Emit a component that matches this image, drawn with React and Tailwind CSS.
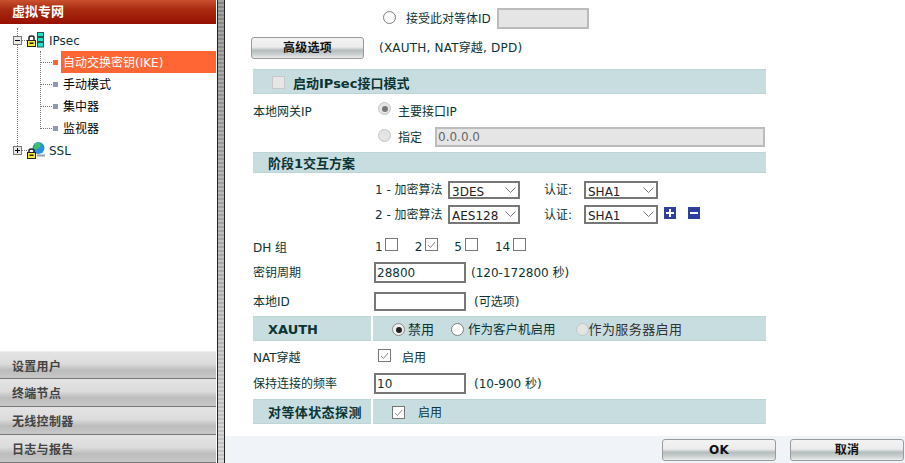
import React from "react";

const FONT = "font-['DejaVu_Sans','Noto_Sans_CJK_SC',sans-serif]";

/* ── Small form bits ── */

function Radio({ on, disabled, className = "" }) {
  return (
    <span
      className={`flex h-[13px] w-[13px] shrink-0 items-center justify-center rounded-full border ${
        disabled ? "border-[#c4c4c4] bg-[#e4e4e4]" : on ? "border-[#8a8a8a] bg-[#efefef]" : "border-[#7d7d7d] bg-white"
      } ${className}`}
    >
      {on && <span className={`h-[6px] w-[6px] rounded-full ${disabled ? "bg-[#777]" : "bg-[#222]"}`} />}
    </span>
  );
}

function Check({ on, disabled, className = "" }) {
  return (
    <span
      className={`flex h-[13px] w-[13px] shrink-0 items-center justify-center border ${
        disabled ? "border-[#c8c8c8] bg-[#e6e6e6]" : "border-[#777] bg-white"
      } ${className}`}
    >
      {on && (
        <svg width="9" height="8" viewBox="0 0 9 8" fill="none">
          <path d="M1 4 L3.5 6.5 L8 1" stroke="#8a8a8a" strokeWidth="1" />
        </svg>
      )}
    </span>
  );
}

function Field({ value = "", className = "", disabled }) {
  return (
    <input
      readOnly
      value={value}
      className={`box-border border-2 px-[1px] text-[12px] outline-none ${
        disabled ? "border-[#bcbcbc] bg-[#e5e5e5] text-[#666]" : "border-[#777] bg-white text-[#0b3535]"
      } ${FONT} ${className}`}
    />
  );
}

function Select({ value, className = "" }) {
  return (
    <span className={`relative block shrink-0 ${className}`}>
      <select
        value={value}
        onChange={() => {}}
        className={`box-border h-full w-full appearance-none border-2 border-[#777] bg-white pl-[2px] text-[12px] text-[#222] outline-none ${FONT}`}
      >
        <option>{value}</option>
      </select>
      <svg className="pointer-events-none absolute right-[4px] top-[6px]" width="11" height="6" viewBox="0 0 11 6" fill="none">
        <path d="M0.5 0.5 L5.5 5.5 L10.5 0.5" stroke="#777" strokeWidth="1" />
      </svg>
    </span>
  );
}

function GlossButton({ children, className = "" }) {
  return (
    <button
      className={`flex items-center justify-center rounded-[3px] border border-[#9a9a9a] bg-[linear-gradient(#f3f3f3_0%,#ececec_45%,#b4bcbc_62%,#cfd4d4_85%,#eeeeee_100%)] text-[12px] font-bold tracking-[0.3px] text-[#111] ${className}`}
    >
      {children}
    </button>
  );
}

function Band({ className = "", children }) {
  return <div className={`flex items-center border-y border-y-[#bdd5d5] bg-[#c8dddf] ${className}`}>{children}</div>;
}

/* ── Sidebar ── */

function IpsecIcon() {
  return (
    <span className="relative block h-[16px] w-[17px]">
      <svg className="absolute bottom-[1px] left-0" width="9" height="12" viewBox="0 0 9 12">
        <path d="M2 6 V2.5 Q2 1 4.5 1 Q7 1 7 2.5 V6" fill="none" stroke="#222" strokeWidth="1.5" />
        <rect x="0.5" y="5.5" width="8" height="6" fill="#f5e93a" stroke="#222" strokeWidth="1" />
        <rect x="2.5" y="7.5" width="4" height="1.5" fill="#222" />
      </svg>
      <svg className="absolute right-0 top-0" width="7" height="16" viewBox="0 0 7 16">
        <rect x="0.5" y="0.5" width="6" height="4" fill="#1fe0c8" stroke="#1a5a50" />
        <rect x="0.5" y="5.5" width="6" height="4" fill="#1fe0c8" stroke="#1a5a50" />
        <rect x="0.5" y="10.5" width="6" height="4.5" fill="#1fe0c8" stroke="#1a5a50" />
      </svg>
    </span>
  );
}

function SslIcon() {
  return (
    <span className="relative block h-[17px] w-[18px]">
      <svg className="absolute right-0 top-0" width="13" height="15" viewBox="0 0 13 15">
        <circle cx="6.5" cy="6" r="6" fill="#2a8fe0" />
        <path d="M3 1.5 Q6 -0.5 8.5 1.5 Q9.5 5 6.5 6 Q4.5 8.5 1.5 6.5 Z" fill="#3fc063" />
        <rect x="5" y="12.5" width="8" height="2" fill="#8fa0b0" />
      </svg>
      <svg className="absolute bottom-0 left-0" width="9" height="11" viewBox="0 0 9 11">
        <path d="M2 5 V2.5 Q2 1 4.5 1 Q7 1 7 2.5 V5" fill="none" stroke="#222" strokeWidth="1.5" />
        <rect x="0.5" y="4.5" width="8" height="6" fill="#f5e93a" stroke="#222" strokeWidth="1" />
        <rect x="2.5" y="6.5" width="4" height="1.5" fill="#222" />
      </svg>
    </span>
  );
}

function Expander({ open }) {
  return (
    <span className="relative z-10 flex h-[9px] w-[9px] items-center justify-center border border-[#777] bg-[#e8e8e8]">
      <span className="absolute h-px w-[5px] bg-black" />
      {!open && <span className="absolute h-[5px] w-px bg-black" />}
    </span>
  );
}

function TreeItem({ label, active }) {
  return (
    <div className="flex h-[22px] items-center">
      <span className="ml-[41px] h-px w-[11px] border-t border-dotted border-t-[#777]" />
      <span className={`ml-[1px] h-[5px] w-[5px] ${active ? "bg-[#ff6633]" : "bg-[#8f98b5]"}`} />
      <span
        className={`ml-[3px] flex h-[22px] flex-1 items-center pl-[2px] pt-[2px] text-[12px] ${
          active ? "bg-[#ff6633] text-white" : "text-black"
        }`}
      >
        {label}
      </span>
    </div>
  );
}

function Accordion({ label, className = "h-[28px]" }) {
  return (
    <div
      className={`flex items-center border-b-[1.5px] border-b-[#777] bg-[linear-gradient(#e4e4e4_0%,#dcdcdc_45%,#bcbcbc_70%,#c8c8c8_100%)] pl-[12px] pt-[3px] text-[12px] font-bold tracking-[0.3px] text-[#444] ${className}`}
    >
      {label}
    </div>
  );
}

function Sidebar() {
  return (
    <aside className="flex h-full w-[216px] shrink-0 flex-col bg-white">
      <div className="flex h-[24px] items-center bg-[linear-gradient(#c9512f_0%,#a82a10_40%,#951000_100%)] pl-[12px] text-[13px] font-bold text-white">
        虚拟专网
      </div>
      <div className="relative flex-1 pt-[7px]">
        <span className="absolute left-[17px] top-[4px] h-[118px] border-l border-dotted border-l-[#777]" />
        <span className="absolute left-[40px] top-[27px] h-[78px] border-l border-dotted border-l-[#777]" />
        <div className="flex h-[18px] items-center pl-[13px]">
          <Expander open />
          <span className="h-px w-[5px] border-t border-dotted border-t-[#777]" />
          <IpsecIcon />
          <span className="ml-[5px] pt-[1px] text-[12px] text-[#0b3535]">IPsec</span>
        </div>
        <div className="mt-[2px]">
          <TreeItem label="自动交换密钥(IKE)" active />
          <TreeItem label="手动模式" />
          <TreeItem label="集中器" />
          <TreeItem label="监视器" />
        </div>
        <div className="flex h-[22px] items-center pl-[13px]">
          <Expander />
          <span className="h-px w-[5px] border-t border-dotted border-t-[#777]" />
          <SslIcon />
          <span className="ml-[4px] pt-[2px] text-[12px] text-[#0b3535]">SSL</span>
        </div>
      </div>
      <div className="h-px bg-[#eeeeee]" />
      <Accordion label="设置用户" className="h-[27px]" />
      <Accordion label="终端节点" />
      <Accordion label="无线控制器" />
      <Accordion label="日志与报告" />
    </aside>
  );
}

/* ── Form ── */

function Form() {
  return (
    <div className="ml-[28px] w-[513px] text-[12px] text-[#0b3535]">
      <div className="flex h-[21px] items-center pl-[130px]">
        <Radio className="-mt-[3px]" />
        <span className="ml-[10px]">接受此对等体ID</span>
        <Field disabled className="ml-[6px] h-[21px] w-[92px]" />
      </div>

      <div className="mt-[8px] flex h-[22px] items-center">
        <GlossButton className="-ml-[2px] h-[22px] w-[113px]">高级选项</GlossButton>
        <span className="ml-[15px] tracking-[0.2px]">(XAUTH, NAT穿越, DPD)</span>
      </div>

      <Band className="mt-[10px] h-[25px] pl-[19px] pt-[2px] text-[13px] font-bold">
        <Check disabled />
        <span className="ml-[8px] pt-[2px]">启动IPsec接口模式</span>
      </Band>

      <div className="mt-[6px] flex h-[22px] items-center">
        <span className="w-[125px] pt-[1px]">本地网关IP</span>
        <Radio on disabled className="-mt-[5px]" />
        <span className="ml-[7px] pt-[1px]">主要接口IP</span>
      </div>
      <div className="mt-[5px] flex h-[20px] items-center pl-[125px]">
        <Radio disabled className="-mt-[3px]" />
        <span className="ml-[7px] pt-[2px]">指定</span>
        <Field disabled value="0.0.0.0" className="ml-[13px] h-[20px] w-[330px]" />
      </div>

      <Band className="mt-[5px] h-[21px] pl-[15px] pt-[2px] text-[13px] font-bold">阶段1交互方案</Band>

      <div className="mt-[8px] flex h-[18px] items-center">
        <span className="w-[122px] shrink-0" />
        <span className="w-[73px]">1 - 加密算法</span>
        <Select value="3DES" className="h-[18px] w-[72px]" />
        <span className="ml-[24px] w-[40px]">认证:</span>
        <Select value="SHA1" className="h-[18px] w-[74px]" />
      </div>
      <div className="mt-[6px] flex h-[19px] items-center">
        <span className="w-[122px] shrink-0" />
        <span className="w-[73px]">2 - 加密算法</span>
        <Select value="AES128" className="h-[19px] w-[72px]" />
        <span className="ml-[24px] w-[40px]">认证:</span>
        <Select value="SHA1" className="h-[19px] w-[74px]" />
        <span className="-mt-[4px] ml-[6px] flex h-[12px] w-[12px] items-center justify-center bg-[#2f3f9f]">
          <svg width="8" height="8" viewBox="0 0 8 8"><path d="M0 4H8M4 0V8" stroke="#fff" strokeWidth="2" /></svg>
        </span>
        <span className="-mt-[4px] ml-[12px] flex h-[12px] w-[12px] items-center justify-center bg-[#2f3f9f]">
          <svg width="8" height="8" viewBox="0 0 8 8"><path d="M0 4H8" stroke="#fff" strokeWidth="2" /></svg>
        </span>
      </div>

      <div className="mt-[13px] flex h-[18px] items-center">
        <span className="w-[122px] pt-[3px]">DH 组</span>
        <span className="pt-[2px]">1</span>
        <Check className="-mt-[3px] ml-[2px]" />
        <span className="ml-[17px] pt-[2px]">2</span>
        <Check on className="-mt-[3px] ml-[3px]" />
        <span className="ml-[16px] pt-[2px]">5</span>
        <Check className="-mt-[3px] ml-[3px]" />
        <span className="ml-[17px] pt-[2px]">14</span>
        <Check className="-mt-[3px] ml-[3px]" />
      </div>

      <div className="mt-[7px] flex h-[21px] items-center">
        <span className="w-[121px] pt-[1px]">密钥周期</span>
        <Field value="28800" className="h-[21px] w-[92px]" />
        <span className="ml-[5px]">(120-172800 秒)</span>
      </div>
      <div className="mt-[9px] flex h-[19px] items-center">
        <span className="w-[121px]">本地ID</span>
        <Field className="h-[19px] w-[92px]" />
        <span className="ml-[8px]">(可选项)</span>
      </div>

      <div className="mt-[5px] flex h-[25px] gap-[2px]">
        <Band className="w-[118px] pl-[15px] pt-[3px] text-[13px] font-bold">XAUTH</Band>
        <Band className="flex-1 pl-[19px] text-[13px]">
          <Radio on className="mt-[2px]" />
          <span className="ml-[3px] pt-[3px]">禁用</span>
          <Radio className="ml-[17px] mt-[2px]" />
          <span className="ml-[4px] pt-[3px] text-[12.5px]">作为客户机启用</span>
          <Radio disabled className="ml-[20px] mt-[2px]" />
          <span className="pt-[3px] tracking-[0.4px] text-[#333]">作为服务器启用</span>
        </Band>
      </div>

      <div className="mt-[6px] flex h-[21px] items-center">
        <span className="w-[125px]">NAT穿越</span>
        <Check on className="-mt-[4px]" />
        <span className="ml-[11px] pt-[1px]">启用</span>
      </div>
      <div className="mt-[5px] flex h-[21px] items-center">
        <span className="w-[121px] pt-[1px]">保持连接的频率</span>
        <Field value="10" className="h-[21px] w-[92px]" />
        <span className="ml-[8px]">(10-900 秒)</span>
      </div>

      <div className="mt-[5px] flex h-[25px] gap-[2px]">
        <Band className="w-[118px] pl-[15px] pt-[3px] text-[13px] font-bold tracking-[0.4px]">对等体状态探测</Band>
        <Band className="flex-1 pl-[19px]">
          <Check on className="mt-[2px]" />
          <span className="ml-[13px] pt-[3px]">启用</span>
        </Band>
      </div>
    </div>
  );
}

export default function App() {
  return (
    <div className={`flex h-[463px] w-[905px] overflow-hidden bg-white ${FONT}`}>
      <Sidebar />
      <div className="ml-px box-border h-full w-[8px] shrink-0 border-x border-x-[#222] bg-[repeating-linear-gradient(rgba(255,255,255,0.18)_0_2px,rgba(0,0,0,0.07)_2px_4px),linear-gradient(#8e8e8e,#d2d2d2)]" />
      <main className="flex h-full flex-1 flex-col">
        <div className="flex-1 pt-[8px]">
          <Form />
        </div>
        <footer className="flex h-[27px] items-start justify-end gap-[14px] bg-[#f0f4f9] pr-[1px] pt-[3px]">
          <GlossButton className="h-[22px] w-[114px]">OK</GlossButton>
          <GlossButton className="h-[22px] w-[114px]">取消</GlossButton>
        </footer>
      </main>
    </div>
  );
}
